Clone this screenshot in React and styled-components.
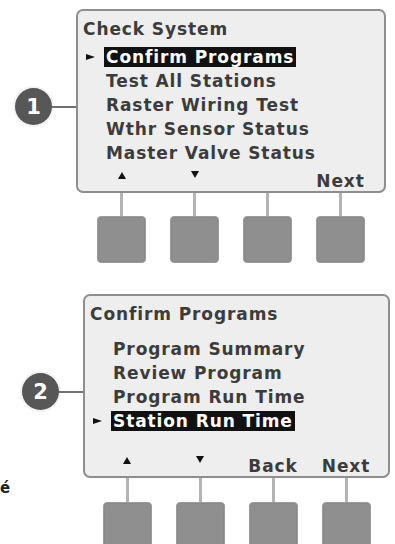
import React from "react";
import styled, { createGlobalStyle } from "styled-components";

const GlobalStyle = createGlobalStyle`
  html, body {
    margin: 0;
    padding: 0;
    background: #ffffff;
  }
  body {
    width: 395px;
    height: 544px;
    overflow: hidden;
    font-family: "DejaVu Sans", Verdana, sans-serif;
  }
`;

const Page = styled.div`
  display: flex;
  flex-direction: column;
  gap: 31px;
  padding-top: 9px;
`;

const Step = styled.div`
  display: flex;
  align-items: flex-start;
  padding-left: ${props => props.$indent}px;
`;

const Side = styled.div`
  display: flex;
  flex-direction: column;
  width: ${props => props.$width}px;
  flex-shrink: 0;
`;

const Callout = styled.div`
  display: flex;
  align-items: center;
  margin-top: 79px;
`;

const Badge = styled.div`
  width: 37px;
  height: 37px;
  border-radius: 50%;
  background: #575757;
  color: #ffffff;
  display: flex;
  align-items: center;
  justify-content: center;
  font: bold 21px "DejaVu Sans", sans-serif;
  box-shadow: 0 0 0 2px #f3f3f3;
  flex-shrink: 0;
`;

const Leader = styled.div`
  flex: 1;
  height: 2px;
  background: #6f6f6f;
`;

const Stray = styled.div`
  margin: 68px 0 0 -22px;
  font: bold 15px "DejaVu Sans", sans-serif;
  line-height: 20px;
  color: #222;
`;

const Unit = styled.div`
  display: flex;
  flex-direction: column;
  width: ${props => props.$width}px;
`;

const Screen = styled.div`
  box-sizing: border-box;
  height: 184px;
  border: 2px solid #8e8e8e;
  border-radius: 7px;
  background: #eeeeee;
  display: flex;
  flex-direction: column;
  padding-top: 6px;
  color: #3c3c3c;
  font-size: 17px;
  font-weight: bold;
  letter-spacing: 0.9px;
  line-height: 24px;
`;

const Title = styled.div`
  padding-left: 5px;
`;

const Menu = styled.div`
  display: flex;
  flex-direction: column;
  margin-top: ${props => props.$gap}px;
`;

const Item = styled.div`
  height: 24px;
  display: grid;
  grid-template-columns: 28px auto;
  align-items: center;
  justify-items: start;
`;

const Pointer = styled.span`
  margin-left: 8px;
  width: 0;
  height: 0;
  border-top: 3.5px solid transparent;
  border-bottom: 3.5px solid transparent;
  border-left: 9px solid #111;
`;

const Label = styled.span`
  display: inline-block;
  margin-left: -2px;
  padding: 0 2px;
  line-height: 20px;
  background: ${props => (props.$active ? "#111111" : "transparent")};
  color: ${props => (props.$active ? "#ffffff" : "inherit")};
`;

const SoftRow = styled.div`
  margin-top: auto;
  display: flex;
  justify-content: center;
  gap: 24px;
  line-height: 20px;
`;

const Soft = styled.div`
  width: 49px;
  height: 20px;
  display: flex;
  justify-content: center;
  align-items: flex-start;
`;

const Arrow = styled.span`
  width: 0;
  height: 0;
  border-left: 4.5px solid transparent;
  border-right: 4.5px solid transparent;
  ${props =>
    props.$up
      ? "border-bottom: 7px solid #111; margin-top: 1px;"
      : "border-top: 7px solid #111; margin-top: 0;"}
`;

const Keys = styled.div`
  display: flex;
  justify-content: center;
  gap: 24px;
`;

const Key = styled.div`
  width: 49px;
  display: flex;
  flex-direction: column;
  align-items: center;
`;

const Stem = styled.div`
  width: 3px;
  height: ${props => props.$length}px;
  background: #b4b4b4;
`;

const Cap = styled.div`
  box-sizing: border-box;
  width: 49px;
  height: 47px;
  border-radius: 4px;
  background: #8f8f8f;
  border: 1px solid #9c9c9c;
  box-shadow: inset 0 0 0 1px #8a8a8a;
`;

const steps = [
  {
    n: "1",
    indent: 15,
    side: 61,
    width: 310,
    stem: 23,
    title: "Check System",
    gap: 4,
    items: [
      "Confirm Programs",
      "Test All Stations",
      "Raster Wiring Test",
      "Wthr Sensor Status",
      "Master Valve Status",
    ],
    active: 0,
    softs: ["up", "down", "", "Next"],
  },
  {
    n: "2",
    indent: 22,
    side: 61,
    width: 307,
    stem: 24,
    title: "Confirm Programs",
    gap: 11,
    items: [
      "Program Summary",
      "Review Program",
      "Program Run Time",
      "Station Run Time",
    ],
    active: 3,
    softs: ["up", "down", "Back", "Next"],
    stray: "é",
  },
];

const SoftLabel = ({ value }) => {
  if (value === "up") return <Arrow $up />;
  if (value === "down") return <Arrow />;
  return value;
};

export default function App() {
  return (
    <>
      <GlobalStyle />
      <Page>
        {steps.map(step => (
          <Step key={step.n} $indent={step.indent}>
            <Side $width={step.side}>
              <Callout>
                <Badge>{step.n}</Badge>
                <Leader />
              </Callout>
              {step.stray && <Stray>{step.stray}</Stray>}
            </Side>
            <Unit $width={step.width}>
              <Screen>
                <Title>{step.title}</Title>
                <Menu $gap={step.gap}>
                  {step.items.map((item, i) => (
                    <Item key={item}>
                      {i === step.active ? <Pointer /> : <span />}
                      <Label $active={i === step.active}>{item}</Label>
                    </Item>
                  ))}
                </Menu>
                <SoftRow>
                  {step.softs.map((s, i) => (
                    <Soft key={i}>
                      <SoftLabel value={s} />
                    </Soft>
                  ))}
                </SoftRow>
              </Screen>
              <Keys>
                {step.softs.map((s, i) => (
                  <Key key={i}>
                    <Stem $length={step.stem} />
                    <Cap />
                  </Key>
                ))}
              </Keys>
            </Unit>
          </Step>
        ))}
      </Page>
    </>
  );
}
